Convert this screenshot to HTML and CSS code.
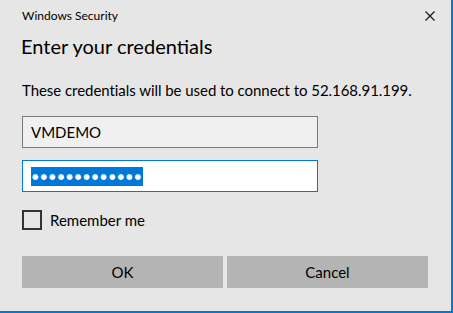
FILE: index.html
```html
<!DOCTYPE html>
<html>
  <head>
    <meta charset="utf-8">
    <link rel="stylesheet" href="styles.css">
  </head>
  <body>
    <div class="dialog">
      <div class="titlebar">
        <span class="title">Windows Security</span>
        <span class="close">
          <svg width="10" height="10" viewBox="0 0 10 10">
            <path d="M0.5 0.5 L9.5 9.5 M9.5 0.5 L0.5 9.5" stroke="#111" stroke-width="1.1" fill="none"/>
          </svg>
        </span>
      </div>
      <div class="heading">Enter your credentials</div>
      <div class="message">These credentials will be used to connect to 52.168.91.199.</div>
      <div class="field field-user">VMDEMO</div>
      <div class="field field-pass"><span class="selected">●●●●●●●●●●●●●</span></div>
      <label class="remember">
        <span class="checkbox"></span>
        <span>Remember me</span>
      </label>
      <div class="buttons">
        <button class="btn">OK</button>
        <button class="btn">Cancel</button>
      </div>
    </div>
  </body>
</html>
```
FILE: styles.css
```css
html, body {
  margin: 0;
  padding: 0;
}

body {
  background: #e6e6e6;
  font-family: Lato, "Open Sans", sans-serif;
  color: #000;
}

.dialog {
  box-sizing: border-box;
  width: 453px;
  height: 313px;
  border-right: 2px solid #0078d7;
  border-bottom: 2px solid #0078d7;
  background: #e6e6e6;
  padding: 0 0 0 22px;
}

.titlebar {
  display: flex;
  justify-content: space-between;
  align-items: center;
  height: 32px;
  padding-right: 16px;
}

.title {
  font-size: 12px;
  line-height: 16px;
  color: #000;
}

.close {
  display: flex;
}

.heading {
  font-size: 20px;
  line-height: 28px;
  margin-left: -1px;
}

.message {
  font-size: 15px;
  line-height: 20px;
  margin-top: 20px;
  letter-spacing: -0.05px;
}

.field {
  box-sizing: border-box;
  width: 296px;
  height: 32px;
  padding: 0 8px;
  display: flex;
  align-items: center;
  font-size: 15px;
}

.field-user {
  margin-top: 16px;
  background: #f0f0f0;
  border: 1px solid #7a7a7a;
}

.field-pass {
  margin-top: 12px;
  background: #fff;
  border: 1px solid #0078d7;
}

.selected {
  background: #0078d7;
  color: #fff;
  font-family: "DejaVu Sans", sans-serif;
  font-size: 7.5px;
  line-height: 19px;
  letter-spacing: 2px;
  padding-left: 1px;
}

.remember {
  display: flex;
  align-items: center;
  margin-top: 18px;
  font-size: 15px;
  line-height: 20px;
}

.checkbox {
  box-sizing: border-box;
  width: 20px;
  height: 20px;
  border: 2px solid #333;
  margin-right: 8px;
}

.buttons {
  display: flex;
  gap: 4px;
  margin-top: 26px;
  width: 406px;
}

.btn {
  flex: 1;
  height: 32px;
  border: none;
  background: #b4b4b4;
  font-family: inherit;
  font-size: 15px;
  color: #000;
  padding: 0;
}
```
